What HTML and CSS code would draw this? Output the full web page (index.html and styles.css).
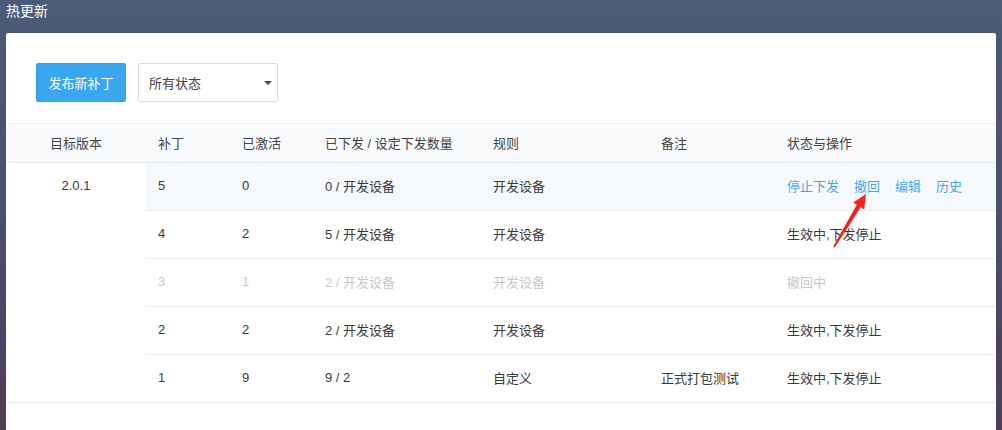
FILE: index.html
```html
<!DOCTYPE html>
<html lang="zh">
<head>
<meta charset="utf-8">
<title>热更新</title>
<link rel="stylesheet" href="styles.css">
</head>
<body>
<div class="title">热更新</div>
<div class="panel">
  <div class="toolbar">
    <button class="btn-primary">发布新补丁</button>
    <div class="select"><span>所有状态</span><i class="caret"></i></div>
  </div>
  <table class="grid">
    <thead>
      <tr>
        <th class="c-ver">目标版本</th>
        <th class="c-patch">补丁</th>
        <th class="c-act">已激活</th>
        <th class="c-sent">已下发 / 设定下发数量</th>
        <th class="c-rule">规则</th>
        <th class="c-note">备注</th>
        <th class="c-op">状态与操作</th>
      </tr>
    </thead>
    <tbody>
      <tr class="hover">
        <td class="c-ver ver" rowspan="5">2.0.1</td>
        <td>5</td><td>0</td><td>0 / 开发设备</td><td>开发设备</td><td></td>
        <td><a class="link">停止下发</a><a class="link">撤回</a><a class="link">编辑</a><a class="link">历史</a></td>
      </tr>
      <tr>
        <td>4</td><td>2</td><td>5 / 开发设备</td><td>开发设备</td><td></td><td>生效中,下发停止</td>
      </tr>
      <tr class="disabled">
        <td>3</td><td>1</td><td>2 / 开发设备</td><td>开发设备</td><td></td><td>撤回中</td>
      </tr>
      <tr>
        <td>2</td><td>2</td><td>2 / 开发设备</td><td>开发设备</td><td></td><td>生效中,下发停止</td>
      </tr>
      <tr>
        <td>1</td><td>9</td><td>9 / 2</td><td>自定义</td><td>正式打包测试</td><td>生效中,下发停止</td>
      </tr>
    </tbody>
  </table>
</div>
<svg class="arrow" width="1002" height="430" viewBox="0 0 1002 430">
  <path d="M866 194 L864.2 209.5 L860.8 207.3 L834.8 247.5 L833.2 246.5 L856.8 204.7 L853.3 202.6 Z" fill="#f0261e"/>
</svg>
</body>
</html>
```
FILE: styles.css
```css
* { box-sizing: border-box; }
html, body { margin: 0; padding: 0; }
body {
  width: 1002px;
  height: 430px;
  overflow: hidden;
  position: relative;
  background: linear-gradient(180deg, #4b5b77 0%, #4a4f6c 50%, #4e3d55 100%);
  font-family: "Liberation Sans", "Noto Sans CJK SC", sans-serif;
  font-size: 13px;
  color: #3a3a3a;
}
.title {
  height: 33px;
  padding: 2px 0 0 6px;
  color: #fff;
  font-size: 14px;
  line-height: 18px;
}
.panel {
  margin: 0 6px;
  width: 990px;
  height: 397px;
  background: #fff;
  border-radius: 2px 2px 0 0;
}
.toolbar {
  display: flex;
  gap: 12px;
  padding: 30px 30px 21px;
}
.btn-primary {
  width: 90px;
  height: 39px;
  border: 1px solid #35a1eb;
  border-radius: 2px;
  background: #39a7ef;
  color: #fff;
  font: inherit;
  font-size: 13px;
  padding: 0 0 1px;
}
.select {
  width: 140px;
  height: 39px;
  border: 1px solid #ddd;
  border-radius: 2px;
  display: flex;
  align-items: center;
  justify-content: space-between;
  padding: 0 5px 1px 10px;
  color: #444;
}
.caret {
  width: 0; height: 0;
  border-left: 4px solid transparent;
  border-right: 4px solid transparent;
  border-top: 4px solid #444;
  margin-top: 1px;
}
.grid {
  width: 100%;
  border-collapse: collapse;
  table-layout: fixed;
  border-top: 1px solid #eceef0;
}
.grid th {
  height: 39px;
  background: #f9fafb;
  font-weight: normal;
  text-align: left;
  padding: 0 12px 2px;
  color: #444;
  border-bottom: 1px solid #e6e9ec;
}
.grid th.c-ver { text-align: center; }
.c-ver { width: 140px; }
.c-patch { width: 84px; }
.c-act { width: 83px; }
.c-sent { width: 168px; }
.c-rule { width: 168px; }
.c-note { width: 126px; }
.c-op { width: 221px; }
.grid td {
  height: 48px;
  padding: 0 12px 2px;
  border-bottom: 1px solid #e8eaec;
  white-space: nowrap;
  color: #3a3a3a;
}
.grid td.ver {
  text-align: center;
  vertical-align: top;
  padding-top: 15px;
  background: #fff;
}
.grid tr.hover td { background: #f6f9fc; }
.grid tr.hover td.ver { background: #fff; }
.grid tr.disabled td { color: #c8c8c8; }
.link {
  color: #4aa7e6;
  margin-right: 15px;
  cursor: pointer;
}
.arrow {
  position: absolute;
  left: 0;
  top: 0;
  pointer-events: none;
}
```
